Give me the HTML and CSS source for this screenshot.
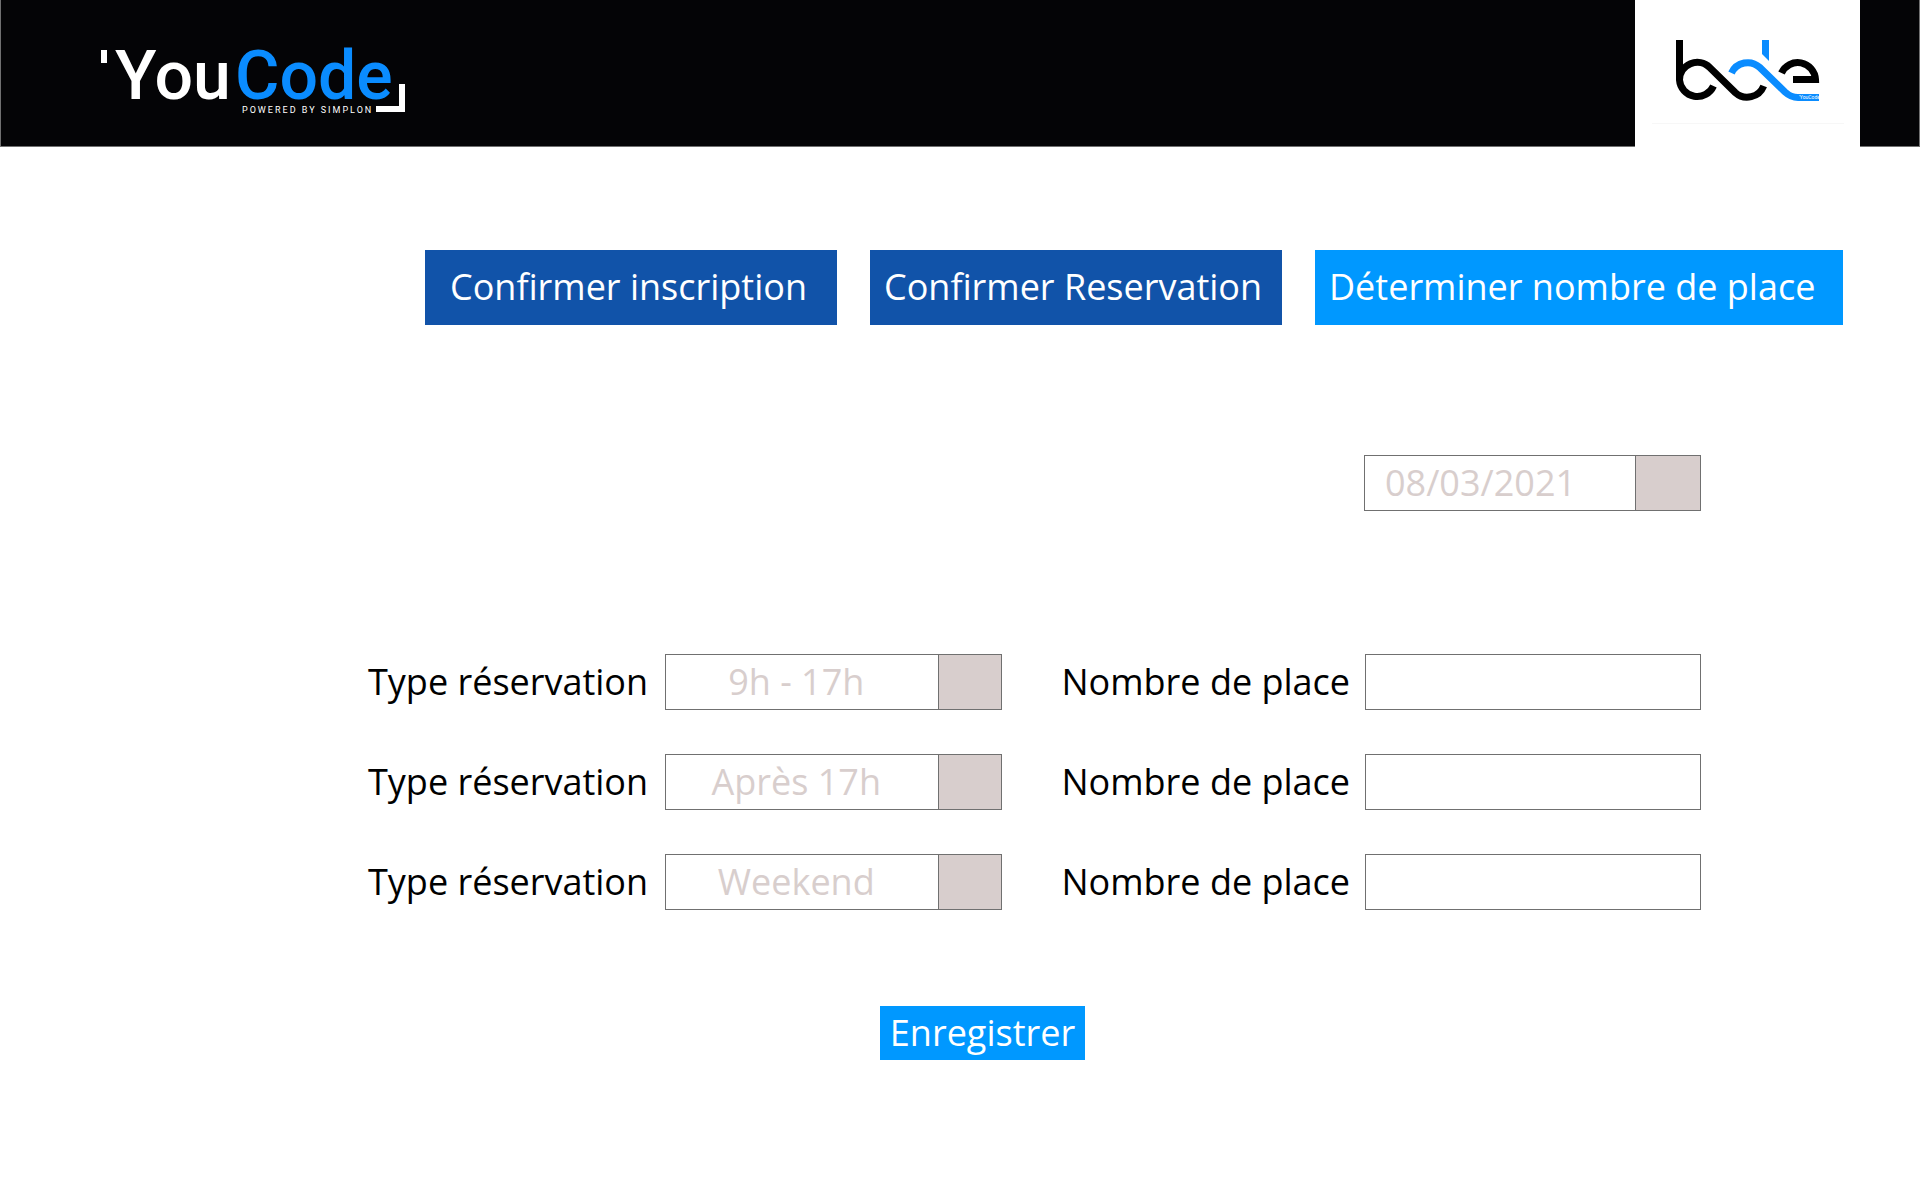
FILE: index.html
```html
<!DOCTYPE html>
<html lang="fr">
<head>
<meta charset="utf-8">
<meta name="viewport" content="width=device-width, initial-scale=1">
<title>YouCode – Déterminer nombre de place</title>
<link rel="stylesheet" href="styles.css">
</head>
<body>
<header class="header">
  <svg class="brand" viewBox="0 -24 308 100" role="img" aria-label="YouCode powered by Simplon">
    <path fill="#fff" d="M2 2h6v13H2zM300 36h6v28h-29v-6h23z"/>
    <text class="brand-name" x="16" y="51"><tspan>You</tspan><tspan class="brand-blue" x="136">Code</tspan></text>
    <text class="brand-tagline" x="143" y="65">POWERED BY SIMPLON</text>
  </svg>
  <div class="bde">
    <svg class="bde-logo" viewBox="0 0 225 146" role="img" aria-label="bde YouCode">
      <g fill="none" stroke="#000" stroke-width="7">
        <path d="M44.500 40V80A17.800 17.800 0 0 0 78.500 86"/>
        <path d="M44.500 80A17.800 17.800 0 0 1 74.700 67.400L100.300 92.600A17.800 17.800 0 0 0 128.700 86"/>
        <path d="M146.500 73A17.800 17.800 0 0 1 180.500 79.500H158"/>
        <path d="M96.500 73A17.800 17.800 0 0 1 124.700 67.400L150 92Q156 97.500 163 97.500H184" stroke="#0a8cff"/>
      </g>
      <path d="M127 40h7v21l-7-7z" fill="#0a8cff"/>
      <text class="bde-name" x="164" y="99">'YouCode</text>
      <path d="M17 123.500H209" stroke="#f7f7f7"/>
    </svg>
  </div>
</header>

<main>
  <nav class="tabs">
    <button type="button" class="tab tab-inset">Confirmer inscription</button>
    <button type="button" class="tab">Confirmer Reservation</button>
    <button type="button" class="tab tab-active">Déterminer nombre de place</button>
  </nav>

  <form class="form">
    <div class="date">
      <input class="date-text" type="text" value="08/03/2021" aria-label="Date">
      <button class="date-button" type="button" aria-label="Choisir une date"></button>
    </div>

    <div class="row row-strong">
      <label for="type1">Type réservation</label>
      <select class="field select" id="type1"><option>9h - 17h</option></select>
      <label class="second" for="places1">Nombre de place</label>
      <input class="field" id="places1" type="text">
    </div>
    <div class="row">
      <label for="type2">Type réservation</label>
      <select class="field select" id="type2"><option>Après 17h</option></select>
      <label class="second" for="places2">Nombre de place</label>
      <input class="field" id="places2" type="text">
    </div>
    <div class="row">
      <label for="type3">Type réservation</label>
      <select class="field select" id="type3"><option>Weekend</option></select>
      <label class="second" for="places3">Nombre de place</label>
      <input class="field" id="places3" type="text">
    </div>

    <button class="save" type="submit">Enregistrer</button>
  </form>
</main>
</body>
</html>
```
FILE: styles.css
```css
* {
  box-sizing: border-box;
}

body {
  margin: 0;
  background: #fff;
  color: #000;
  font-family: "Segoe UI", "Open Sans", "Noto Sans", sans-serif;
  font-size: 36px;
  line-height: 48px;
}

button,
input,
select {
  margin: 0;
  font: inherit;
  border-radius: 0;
}

.header {
  display: flex;
  justify-content: space-between;
  height: 147px;
  padding: 0 59px 0 98px;
  background: #040406;
  border: 1px solid #707070;
  border-top: 0;
}

.brand {
  width: 308px;
  height: 100px;
  margin-top: 24px;
}

.brand-name {
  fill: #fff;
  font-family: Roboto, sans-serif;
  font-size: 68px;
  font-weight: 500;
}

.brand-blue {
  fill: #0a8cff;
}

.brand-tagline {
  fill: #fff;
  font-family: Roboto, sans-serif;
  font-size: 9px;
  letter-spacing: 2px;
}

.bde {
  width: 225px;
  height: 147px;
  background: #fff;
}

.bde-logo {
  display: block;
  width: 225px;
  height: 146px;
}

.bde-name {
  fill: #fff;
  font-family: Roboto, sans-serif;
  font-size: 5px;
}

.tabs {
  display: grid;
  grid-template-columns: 412fr 412fr 528fr;
  gap: 33px;
  margin: 103px 77px 0 425px;
}

.tab {
  height: 75px;
  padding: 0 0 2px 14px;
  border: 0;
  background: #1153a9;
  color: #fff;
  text-align: left;
  white-space: nowrap;
}

.tab-inset {
  padding-left: 25px;
}

.tab-active {
  background: #0098ff;
}

.form {
  display: flex;
  flex-direction: column;
  gap: 44px;
  padding: 130px 219px 64px 368px;
}

.date {
  display: flex;
  align-self: flex-end;
  width: 337px;
  height: 56px;
  margin-bottom: 99px;
  border: 1px solid #707070;
}

.date-text {
  flex: 1;
  min-width: 0;
  padding: 0 0 0 20px;
  border: 0;
  background: #fff;
  color: #d8cecd;
}

.date-button {
  width: 65px;
  border: 0;
  border-left: 1px solid #707070;
  background: #d8cecd;
}

.row {
  display: grid;
  grid-template-columns: 297px 1fr 363px 1fr;
  align-items: center;
  white-space: nowrap;
}

.row-strong label {
  font-weight: 500;
}

.second {
  padding-left: 60px;
}

.field {
  width: 100%;
  height: 56px;
  padding: 0 12px;
  border: 1px solid #707070;
  background: #fff;
}

.select {
  appearance: none;
  padding: 0 74px 0 0;
  background: linear-gradient(#707070, #707070) right 62px top / 1px 100% no-repeat,
    linear-gradient(#d8cecd, #d8cecd) right top / 62px 100% no-repeat, #fff;
  color: #d8cecd;
  text-align: center;
  text-align-last: center;
}

.save {
  width: 205px;
  height: 54px;
  margin: 52px 0 0 512px;
  padding: 0;
  border: 0;
  background: #0098ff;
  color: #fff;
}
```
